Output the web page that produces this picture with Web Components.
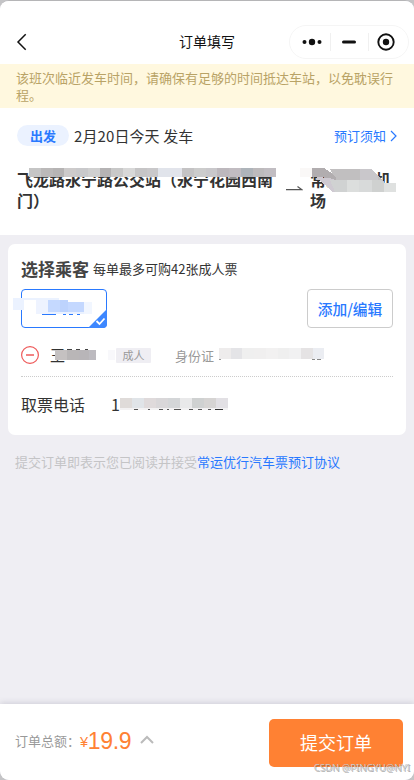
<!DOCTYPE html>
<html lang="zh-CN">
<head>
<meta charset="utf-8">
<meta name="viewport" content="width=device-width, initial-scale=1">
<title>订单填写</title>
<style>
  body {
    margin: 0;
    background: #c4c4c6;
    font-family: "Noto Sans CJK SC", sans-serif;
    color: #333;
  }
  .gap { display: inline-block; width: 33px; }
</style>
</head>
<body>
<order-page>
  <nav-bar slot="header">订单填写</nav-bar>
  <notice-bar slot="header">该班次临近发车时间，请确保有足够的时间抵达车站，以免耽误行程。</notice-bar>
  <trip-info>
    <span slot="date">2月20日今天 发车</span>
    <span slot="from">飞龙路永宁路公交站（永宁花园西南门）</span>
    <span slot="to">常州<i class="gap"></i>机<br>场</span>
  </trip-info>
  <passenger-card></passenger-card>
  <agreement-line>提交订单即表示您已阅读并接受<a slot="link">常运优行汽车票预订协议</a></agreement-line>
  <order-footer slot="footer" price="19.9">提交订单</order-footer>
</order-page>

<script>
// Small helper: every component renders once into its own shadow root
class BaseElement extends HTMLElement {
  constructor() {
    super();
    this.attachShadow({ mode: 'open' });
  }
  connectedCallback() {
    this.shadowRoot.innerHTML = this.render();
  }
}

class OrderPage extends BaseElement {
  render() {
    return `
      <style>
        :host {
          display: flex;
          flex-direction: column;
          box-sizing: border-box;
          height: 780px;
          border-top: 1px solid #b5b5b7;
          border-radius: 9px;
          overflow: hidden;
          background: #efeef3;
        }
        main { flex: 1; }
      </style>
      <slot name="header"></slot>
      <main><slot></slot></main>
      <slot name="footer"></slot>`;
  }
}

class NavBar extends BaseElement {
  render() {
    return `
      <style>
        :host {
          display: grid;
          grid-template-columns: 163px 1fr auto;
          align-items: center;
          height: 63px;
          padding: 19px 5px 0 16px;
          box-sizing: border-box;
          background: #fff;
          color: #111;
          font-size: 14px;
          line-height: 20px;
        }
        .title { margin-bottom: 3px; }
        svg { display: block; }
      </style>
      <svg width="12" height="18" viewBox="0 0 12 18" fill="none" stroke="#111" stroke-width="1.5"><path d="M9.7 1.2 2 9l7.700 7.800"/></svg>
      <span class="title"><slot></slot></span>
      <svg class="capsule" width="120" height="34" viewBox="0 0 120 34">
        <rect x=".5" y=".5" width="119" height="33" rx="16.500" fill="#fff" stroke="#f5f5f5"/>
        <path d="M41.500 8v18M79.500 8v18" stroke="#f0f0f0"/>
        <g fill="#111">
          <circle cx="15.500" cy="17" r="2"/><circle cx="23" cy="17" r="3.200"/><circle cx="30.500" cy="17" r="2"/>
          <rect x="53" y="15.500" width="14" height="3" rx="1.500"/>
          <circle cx="97" cy="17" r="3.200"/>
        </g>
        <circle cx="97" cy="17" r="7.700" fill="none" stroke="#111" stroke-width="1.900"/>
      </svg>`;
  }
}

class NoticeBar extends BaseElement {
  render() {
    return `
      <style>
        :host {
          display: block;
          box-sizing: border-box;
          height: 44px;
          padding: 5px 16px 0;
          background: #fff8df;
          color: #b9a366;
          font-size: 13px;
          line-height: 17px;
        }
      </style>
      <slot></slot>`;
  }
}

// Pixelated strip over private data. cells: "x,y,w,h,color;..."
class MosaicMask extends BaseElement {
  render() {
    const rects = (this.getAttribute('cells') || '').split(';').filter(Boolean).map(c => {
      const [x, y, w, h, fill] = c.split(',');
      return `<rect x="${x}" y="${y}" width="${w}" height="${h}" fill="${fill}"/>`;
    }).join('');
    const polys = (this.getAttribute('shapes') || '').split(';').filter(Boolean).map(s => {
      const [points, fill] = s.split('|');
      return `<polygon points="${points}" fill="${fill}"/>`;
    }).join('');
    return `
      <style>
        :host { display: block; position: absolute; pointer-events: none; }
        svg { display: block; overflow: visible; }
      </style>
      <svg width="1" height="1" shape-rendering="crispEdges">${polys}${rects}</svg>`;
  }
}

// Equal cells in one row
const row = (colors, y, h, w = 12, x = 0) =>
  colors.map((c, i) => [x + i * w, y, w, h, c].join(',')).join(';');

class TripInfo extends BaseElement {
  render() {
    const fromCells = row(['#c5c5c5', '#bbb9b9', '#b6b4b4', '#cdcbcb', '#c9c9cb', '#d0d0d0', '#b5b3b4', '#c8c8c8', '#d8d8d8', '#c6c5c6', '#c9c8ca', '#e1e4eb', '#e2e4eb', '#c4c3c4', '#ccc', '#c9c8cb', '#bdb8bd', '#c1bcc1', '#aeb4ba', '#bdbabc', '#c1bdc2'], 0, 9, 11.77);
    return `
      <style>
        :host {
          display: block;
          box-sizing: border-box;
          height: 127px;
          padding: 17px 17px 0;
          background: #fff;
        }
        .head { display: flex; align-items: center; height: 21px; }
        .badge {
          width: 52px;
          height: 21px;
          border-radius: 11px;
          background: #ebf2ff;
          color: #2979ff;
          font-size: 13px;
          font-weight: 700;
          line-height: 21px;
          text-align: center;
        }
        .date { margin-left: 5px; font-size: 15px; line-height: 21px; letter-spacing: .1px; }
        .tip {
          display: flex;
          align-items: center;
          gap: 4px;
          margin-left: auto;
          color: #2979ff;
          font-size: 13px;
          line-height: 20px;
        }
        .route {
          position: relative;
          display: grid;
          grid-template-columns: 260px 1fr 87px;
          margin-top: 23px;
          font-size: 16px;
          font-weight: 700;
          line-height: 20.500px;
        }
        .route > svg { margin: 16px 0 0 9px; }
        .from-mask { left: 12px; top: -1px; }
        .to-mask { left: 283px; top: -1px; }
      </style>
      <div class="head">
        <span class="badge">出发</span>
        <span class="date"><slot name="date"></slot></span>
        <span class="tip">预订须知
          <svg width="7" height="12" viewBox="0 0 7 12" fill="none" stroke="#2979ff" stroke-width="1.200"><path d="m1 1 5 5-5 5"/></svg>
        </span>
      </div>
      <div class="route">
        <slot name="from"></slot>
        <svg width="17" height="6" viewBox="0 0 17 6" fill="none" stroke="#555" stroke-width="1.200"><path d="M0 4.700h16L11.500 1.500"/></svg>
        <slot name="to"></slot>
        <mosaic-mask class="from-mask" cells="${fromCells}"></mosaic-mask>
        <mosaic-mask class="to-mask"
          cells="0,0,12,9,#faf8f7"
          shapes="30,1 71,1 78,7 84,14 84,15 36,13|#c1bfc0;60,1 71,1 78,7 78,12 60,12|#c9c7cb;12,0 24,0 30,4 36,9 36,13 29,11 22,9 12,9|#b1adaf;16,9 29,10 36,12 36,24 33,24|#cfcad2;30,12 47,12 47,24 35,24|#d0d2d2;47,12 59,12 59,24 47,24|#dcdedd;59,12 72,12 72,24 59,24|#d8dada;72,12 82,12 84,15 84,24 72,24|#cfd1d0;84,15 96,15 96,24 84,24|#dfe1e0"></mosaic-mask>
      </div>`;
  }
}

class PassengerCard extends BaseElement {
  render() {
    const idCells = row(['#eeecec', '#e4e4e7', '#efefef', '#f0efef', '#f2f1f1', '#efefef', '#f1f1f2', '#e5e3e4', '#ebedf2'], 1, 11, 11.7);
    const phoneCells = row(['#dfdbd9', '#e0e4e8', '#dfdadb', '#d9d7d9', '#d4d6d8', '#e9e9ea', '#cfd1d1', '#d6d4d3', '#e2e0e4'], 0, 10, 12);
    return `
      <style>
        :host {
          display: block;
          box-sizing: border-box;
          height: 191px;
          margin: 9px 8px 0;
          padding: 13px 13px 0;
          border-radius: 7px;
          background: #fff;
        }
        .title { display: flex; align-items: center; gap: 4px; height: 24px; font-size: 13px; }
        .title span { margin-top: -1px; }
        h2 { margin: 0; font-size: 17px; line-height: 24px; color: #444; }
        .picker { display: flex; justify-content: space-between; margin-top: 8px; }
        .chip, .edit {
          position: relative;
          box-sizing: border-box;
          width: 86px;
          height: 39px;
          border: 1px solid #2979ff;
          border-radius: 4px;
        }
        .chip > svg { position: absolute; right: -1px; bottom: -1px; }
        .edit {
          border-color: #ccc;
          color: #2979ff;
          font-size: 14.700px;
          font-weight: 500;
          line-height: 37px;
          text-align: center;
        }
        .person {
          position: relative;
          display: flex;
          align-items: center;
          height: 48px;
          border-bottom: 1px dotted #ccc;
          font-size: 15px;
        }
        .person > svg { margin: 6px 11px 0 0; }
        .name { width: 66px; margin-top: 5px; }
        .tag {
          width: 35px;
          height: 15px;
          margin: 7px 24px 0 0;
          background: #efeef3;
          border-radius: 1px;
          color: #999;
          font-size: 11px;
          line-height: 15px;
          text-align: center;
        }
        .id { margin-top: 6px; color: #999; font-size: 13px; }
        .phone { position: relative; display: flex; height: 54px; align-items: center; font-size: 16px; }
        .phone .value { margin-left: 26px; }
      </style>
      <div class="title"><h2>选择乘客</h2><span>每单最多可购42张成人票</span></div>
      <div class="picker">
        <div class="chip">
          <svg width="19" height="19" viewBox="0 0 19 19"><path d="M19 0v15a4 4 0 0 1-4 4H0z" fill="#3d87ff"/><path d="m8.500 12 3 3 5-5.500" fill="none" stroke="#fff" stroke-width="1.800"/></svg>
          <mosaic-mask style="left:-9px;top:8px"
            cells="0,0,11,12,#ebf2ff;11,0,35,2,#ebf2ff;23,2,12,14,#eef3ff;35,2,12,12,#c5d9ff;47,2,8,12,#bdd3fd;55,4,16,10,#c4d8ff;71,4,8,12,#f1f6ff;35,14,36,2,#eaf1ff;29,16,14,1,#2979ff;50,16,3,1,#2979ff;56,16,4,1,#2979ff;64,16,3,1,#2979ff"></mosaic-mask>
        </div>
        <div class="edit">添加/编辑</div>
      </div>
      <div class="person">
        <svg width="18" height="18" viewBox="0 0 18 18" fill="none" stroke="#ee5a5a"><circle cx="9" cy="9" r="8.400" stroke-width="1.200"/><path d="M5 9h8" stroke-width="1.500"/></svg>
        <span class="name">王</span>
        <span class="tag">成人</span>
        <span class="id">身份证</span>
        <mosaic-mask style="left:34px;top:20px"
          cells="0,2,12,10,#c5c1c1;12,2,12,10,#b9b6b7;24,2,10,10,#b8b5b8;34,2,7,10,#bcbabf;12,1,5,1,#444;21,1,4,1,#444;30,1,3,1,#444;53,2,7,10,#f8f8fb"></mosaic-mask>
        <mosaic-mask style="left:198px;top:19px" cells="${idCells};0,12,2,1,#999;93,12,3,1,#888;98,12,4,1,#888"></mosaic-mask>
      </div>
      <div class="phone">
        <span>取票电话</span><span class="value">1</span>
        <mosaic-mask style="left:99px;top:21px" cells="${phoneCells};0,10,108,2,#f3f2f3;14,11,4,1,#555;28,11,2,1,#555;39,11,4,1,#555;47,11,2,1,#555;54,11,7,1,#555;69,11,4,1,#555;78,11,4,1,#555;88,11,3,1,#555;95,11,8,1,#333"></mosaic-mask>
      </div>`;
  }
}

class AgreementLine extends BaseElement {
  render() {
    return `
      <style>
        :host { display: block; margin: 17px 15px 0; font-size: 13px; line-height: 20px; color: #c4c4c6; }
        ::slotted(a) { color: #2979ff; }
      </style>
      <slot></slot><slot name="link"></slot>`;
  }
}

class OrderFooter extends BaseElement {
  render() {
    return `
      <style>
        :host {
          position: relative;
          display: flex;
          align-items: center;
          box-sizing: border-box;
          height: 76px;
          padding: 2px 11px 0 15px;
          background: #fff;
          box-shadow: 0 -1px 6px rgba(60, 60, 90, .18);
        }
        .label { width: 65px; margin-bottom: 6px; color: #999; font-size: 13px; white-space: nowrap; }
        .price {
          display: flex;
          align-items: center;
          margin-bottom: 4px;
          color: #ff8133;
          font: 23px/30px "Liberation Sans", Arial, sans-serif;
          letter-spacing: -.3px;
        }
        .price small { font-size: 14.500px; margin-top: 2px; }
        .arrow { margin: 0 0 7px 9px; }
        .submit {
          width: 134px;
          height: 48px;
          margin-left: auto;
          padding: 0 0 2px;
          border: 0;
          border-radius: 5px;
          background: #ff8133;
          color: #fff;
          font: 18px "Noto Sans CJK SC", sans-serif;
        }
        .mark {
          position: absolute;
          right: 4px;
          bottom: 5px;
          color: #c9c9cb;
          font: 9.500px/15px "Noto Sans", sans-serif;
          text-shadow: 1px 1px 0 rgba(90, 90, 90, .5);
          white-space: nowrap;
        }
      </style>
      <span class="label">订单总额：</span>
      <span class="price"><small>¥</small>${this.getAttribute('price')}</span>
      <svg class="arrow" width="14" height="9" viewBox="0 0 14 9" fill="none" stroke="#bbb" stroke-width="2"><path d="m1 8 6-6 6 6"/></svg>
      <button class="submit"><slot></slot></button>
      <span class="mark">CSDN @PINGYU@NYI</span>`;
  }
}

customElements.define('mosaic-mask', MosaicMask);
customElements.define('nav-bar', NavBar);
customElements.define('notice-bar', NoticeBar);
customElements.define('trip-info', TripInfo);
customElements.define('passenger-card', PassengerCard);
customElements.define('agreement-line', AgreementLine);
customElements.define('order-footer', OrderFooter);
customElements.define('order-page', OrderPage);
</script>
</body>
</html>
